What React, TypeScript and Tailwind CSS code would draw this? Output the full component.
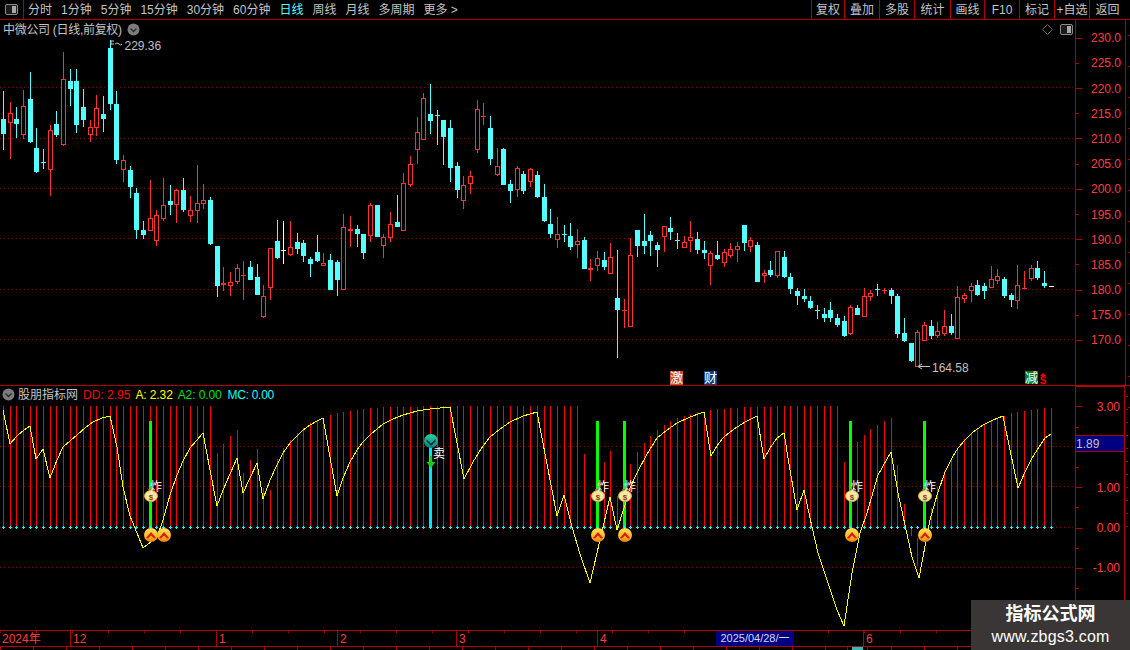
import React from "react";

// kind (0 cyan, 1 red, 2 white), high, body top, body bottom, low
type Candle = [number, number, number, number, number];

const candles: Candle[] = [
  [0,91,119,134,150],[1,102,113,123,159],[0,107,119,124,138],[1,90,106,135,139],[0,72,99,142,143],
  [0,128,148,172,173],[0,149,162,163,169],[1,125,130,170,196],[0,111,124,135,137],[1,52,79,145,146],
  [0,69,81,89,106],[0,69,81,125,133],[0,89,107,120,127],[1,120,127,135,142],[1,95,108,128,136],
  [0,96,114,119,132],[0,40,48,104,110],[0,91,104,160,164],[1,155,160,170,182],[0,166,170,187,198],
  [0,188,193,230,239],[0,221,230,235,239],[1,180,218,231,231],[1,210,215,241,246],[1,178,205,219,221],
  [0,185,201,205,215],[1,189,190,205,223],[0,178,190,210,212],[1,196,210,216,222],[1,165,203,211,223],
  [1,184,200,204,209],[0,197,200,244,245],[0,246,246,286,297],[1,267,283,285,291],[1,272,282,286,296],
  [1,264,268,282,284],[1,261,275,276,300],[0,261,267,280,280],[0,264,277,295,295],[1,285,296,317,318],
  [1,248,248,288,300],[0,220,241,258,259],[2,221,250,251,264],[1,221,247,255,256],[0,233,242,249,254],
  [0,240,243,256,262],[0,257,259,264,277],[0,235,252,261,262],[1,253,263,266,266],[0,254,260,290,290],
  [0,260,262,280,296],[1,214,227,290,290],[1,216,229,231,247],[0,225,229,234,247],[0,234,234,253,259],
  [1,203,205,236,242],[0,205,205,237,237],[1,234,237,246,258],[1,212,224,238,242],[0,195,222,227,227],
  [1,173,183,231,231],[1,156,164,185,187],[1,117,132,150,164],[1,93,98,140,140],[0,84,114,121,134],
  [0,110,115,116,145],[0,120,120,137,165],[0,120,128,168,182],[0,162,166,190,198],[1,176,185,201,209],
  [1,171,176,184,194],[1,100,109,150,153],[1,103,116,117,125],[0,116,128,159,165],[1,148,166,175,176],
  [0,148,149,185,185],[0,180,184,191,203],[1,166,168,190,197],[0,171,174,191,194],[1,168,169,182,187],
  [0,171,175,197,198],[0,184,197,221,222],[0,209,224,234,238],[1,217,234,240,248],[0,225,234,235,242],
  [0,223,236,247,250],[1,229,241,245,258],[0,237,240,269,269],[1,259,268,270,281],[1,251,258,266,271],
  [0,252,260,267,270],[1,243,257,274,274],[0,250,298,310,358],[1,299,310,311,328],[1,238,255,327,327],
  [0,230,230,246,257],[0,214,241,246,254],[0,231,235,241,256],[0,242,245,250,267],[1,226,226,237,252],
  [0,217,228,232,240],[0,233,240,241,249],[1,236,242,248,248],[1,221,237,241,252],[0,232,239,250,254],
  [0,241,250,253,259],[1,251,253,266,285],[0,241,255,259,260],[1,249,252,263,267],[1,243,249,256,258],
  [1,242,246,250,262],[0,225,225,243,251],[1,237,240,247,252],[0,242,245,282,282],[1,270,273,276,283],
  [0,261,270,275,277],[1,251,251,276,278],[0,251,257,277,278],[0,273,277,289,294],[0,288,291,296,305],
  [0,289,296,299,302],[0,296,301,308,309],[0,305,310,311,319],[0,308,314,318,322],[0,302,310,318,322],
  [0,314,318,325,327],[0,316,321,336,337],[1,305,307,334,335],[0,305,308,315,315],[1,288,296,317,317],
  [1,290,293,297,301],[0,284,289,290,296],[1,288,290,291,294],[0,288,290,296,304],[0,294,296,334,338],
  [0,318,333,341,342],[0,343,343,361,362],[1,330,332,367,367],[1,322,325,341,341],[0,320,326,336,339],
  [1,322,331,336,338],[1,310,326,334,336],[0,314,326,333,335],[1,286,297,339,339],[1,293,295,299,303],
  [1,283,286,291,302],[0,280,285,295,296],[0,283,286,291,299],[1,266,279,288,288],[1,269,276,281,284],
  [0,277,279,296,298],[0,293,295,300,307],[1,265,285,301,309],[1,271,288,289,289],[1,265,268,279,281],
  [0,261,268,278,280],[0,271,283,286,288],[2,286,286,287,287],
];

// top of each red bar in the indicator panel, 0 where a green signal bar stands instead
const barTops = [
  406,406,406,406,406,406,406,406,406,406,406,406,406,406,406,406,406,406,406,406,406,406,406,406,406,406,406,406,406,406,406,406,
  453,444,436,430,473,460,449,488,490,459,448,440,433,428,423,420,418,415,413,412,411,410,409,408,408,407,407,407,407,407,407,
  406,406,406,406,406,406,406,406,406,406,406,406,406,406,406,406,406,406,406,406,406,406,406,406,
  454,494,0,462,451,496,0,464,452,443,436,430,425,421,418,416,414,412,412,410,409,409,408,408,407,407,407,407,407,
  406,406,406,406,406,406,406,406,406,406,462,0,442,435,429,425,421,418,465,504,0,0,0,508,487,471,458,448,439,434,428,424,421,418,416,413,412,411,410,409,408,408,
];

const yellowLine =
  "3,410 10,444 17,436 24,430 30,426 36,459 43,449 50,478 57,460 63,447 70,441 77,435 85,428 93,422 102,418 110,416 117,447 123,487 130,516 137,533 143,548 157,537 163,520 170,495 177,475 183,461 190,448 197,440 203,433 210,470 217,506 223,490 230,474 237,458 243,493 250,478 257,463 263,499 270,480 277,465 283,453 290,443 297,436 303,430 310,425 317,421 323,418 330,457 337,496 343,478 350,462 357,450 363,442 370,435 377,429 383,424 393,419 403,415 417,411 430,409 440,408 450,407 457,443 464,479 473,462 481,449 490,437 500,429 510,422 523,416 537,412 547,464 557,516 564,495 572,527 580,554 590,583 600,540 610,497 617,530 624,508 630,488 637,473 647,454 657,438 667,430 677,423 690,417 704,412 711,456 717,446 723,438 730,432 737,427 747,421 757,416 764,459 770,448 777,438 784,433 790,470 797,510 804,490 812,527 818,553 827,580 837,610 844,626 852,573 860,533 867,513 878,475 891,452 898,493 905,525 912,557 919,578 930,520 937,495 945,472 952,458 958,448 965,440 973,432 983,425 993,420 1003,416 1010,450 1018,488 1025,472 1032,458 1039,447 1045,438 1051,434";

const candleX = (i: number) => Math.round(3 + i * 6.673);

const leftTabs = [
  { label: "分时" },
  { label: "1分钟" },
  { label: "5分钟" },
  { label: "15分钟" },
  { label: "30分钟" },
  { label: "60分钟" },
  { label: "日线", active: true },
  { label: "周线" },
  { label: "月线" },
  { label: "多周期" },
  { label: "更多 >" },
];

const rightTabs = [
  { label: "复权", w: "w-[33px]" },
  { label: "叠加", w: "w-[35px]" },
  { label: "多股", w: "w-[35px]" },
  { label: "统计", w: "w-[36px]" },
  { label: "画线", w: "w-[34px]" },
  { label: "F10", w: "w-[35px]" },
  { label: "标记", w: "w-[35px]" },
  { label: "+自选", w: "w-[35px]" },
  { label: "返回", w: "w-[36px]" },
];

const priceLabels = ["230.0", "225.0", "220.0", "215.0", "210.0", "205.0", "200.0", "195.0", "190.0", "185.0", "180.0", "175.0", "170.0"];
const indicatorLabels = ["3.00", "", "", "", "1.00", "", "0.00", "", "-1.00", "", ""];

const timeCells = [
  { label: "2024年", w: "w-[70px]" },
  { label: "12", w: "w-[146px]" },
  { label: "1", w: "w-[121px]" },
  { label: "2", w: "w-[119px]" },
  { label: "3", w: "w-[141px]" },
  { label: "4", w: "w-[119px]" },
];

function RoundArrow({ className }: { className: string }) {
  return (
    <svg width="13" height="13" viewBox="0 0 13 13" className={className}>
      <circle cx="6.5" cy="6.5" r="6" fill="#7c7c7c" />
      <path d="M3.5 5.5 L6.5 8.5 L9.5 5.5" fill="none" stroke="#2a2a2a" strokeWidth="1.3" />
    </svg>
  );
}

function SplitButton({ className }: { className?: string }) {
  return (
    <svg width="13" height="11" viewBox="0 0 13 11" className={className}>
      <rect x="0.5" y="0.5" width="12" height="10" rx="1.5" fill="#1c1c1c" stroke="#8a8a8a" />
      <rect x="7" y="2" width="4" height="7" fill="#a8a8a8" />
    </svg>
  );
}

function UpSignal({ x }: { x: number }) {
  return (
    <g>
      <circle cx={x} cy="535" r="7" fill="url(#signalUp)" />
      <path d={`M${x - 5} 538 L${x} 532 L${x + 5} 538 L${x + 3} 538.5 L${x} 535.5 L${x - 3} 538.5 Z`} fill="#d81e06" />
    </g>
  );
}

function MoneyBag({ x }: { x: number }) {
  return (
    <g>
      <path d={`M${x - 3} 489 L${x + 2} 489 L${x + 1} 491 L${x - 2} 491 Z`} fill="#a8703a" />
      <ellipse cx={x} cy="496" rx="6.5" ry="5.5" fill="#f6e7a2" stroke="#d9a93c" />
      <text x={x} y="499.5" textAnchor="middle" fontSize="8" fontWeight="700" fill="#8a3a2a">$</text>
      <text x={x - 1} y="490.5" fontSize="12" fill="#ffffff">炸</text>
    </g>
  );
}

function DottedLine({ y }: { y: number }) {
  return <line x1="0" x2="1075" y1={y + 0.5} y2={y + 0.5} stroke="#800000" strokeDasharray="1 3" shapeRendering="auto" />;
}

function PriceChart() {
  return (
    <svg viewBox="0 20 1075 365" className="block h-[365px] w-[1075px]" shapeRendering="crispEdges">
      {[87, 138, 188, 238, 289, 339].map((y) => (
        <DottedLine key={y} y={y} />
      ))}
      {candles.map(([kind, high, top, bottom, low], i) => {
        const x = candleX(i);
        const color = kind === 0 ? "#54ffff" : kind === 1 ? "#ff3232" : "#ffffff";
        const flat = bottom - top < 3;
        return (
          <g key={i}>
            <line x1={x + 0.5} x2={x + 0.5} y1={high} y2={low} stroke={color} />
            {kind === 1 && !flat ? (
              <rect x={x - 1.5} y={top + 0.5} width="4" height={bottom - top - 1} fill="#000000" stroke={color} />
            ) : (
              <rect x={x - 2} y={top} width="5" height={Math.max(bottom - top, 1)} fill={color} />
            )}
          </g>
        );
      })}
      <g shapeRendering="auto">
        <path d="M111 44 L111 41 L114 41 M111 44 L114 44 M115 44 Q117 42 119 44 T122 44" fill="none" stroke="#c0c0c0" />
        <text x="124.5" y="50" fontSize="12" fill="#c0c0c0">229.36</text>
        <path d="M918 366.5 L930 366.5 M918 366.5 L922 364 M918 366.5 L922 369" fill="none" stroke="#c0c0c0" />
        <text x="932" y="372" fontSize="12" fill="#c0c0c0">164.58</text>
      </g>
      <rect x="670" y="371" width="13" height="14" fill="#c8501e" />
      <rect x="704" y="371" width="13" height="14" fill="#0c3f78" />
      <rect x="1025" y="371" width="13" height="13" fill="#0a7a12" />
      <g shapeRendering="auto">
        <text x="670" y="382" fontSize="13" fill="#ffffff">激</text>
        <text x="704" y="382" fontSize="13" fill="#ffffff">财</text>
        <text x="1025" y="382" fontSize="13" fill="#ffffff">减</text>
        <path d="M1043 373 L1046 376 L1040 376 Z" fill="#ff0000" />
        <text x="1043" y="384" textAnchor="middle" fontSize="10" fontWeight="700" fill="#ff0000">S</text>
      </g>
    </svg>
  );
}

function IndicatorChart() {
  return (
    <svg viewBox="0 386 1075 244" className="block h-[244px] w-[1075px]" shapeRendering="crispEdges">
      <defs>
        <linearGradient id="signalUp" x1="0" y1="0" x2="0" y2="1">
          <stop offset="0" stopColor="#ffe45c" />
          <stop offset="0.6" stopColor="#fdb52a" />
          <stop offset="1" stopColor="#ee7f0a" />
        </linearGradient>
        <linearGradient id="signalDown" x1="0" y1="0" x2="0" y2="1">
          <stop offset="0" stopColor="#2ad0a8" />
          <stop offset="1" stopColor="#0e7f78" />
        </linearGradient>
      </defs>
      {[446, 486, 527, 567].map((y) => (
        <DottedLine key={y} y={y} />
      ))}
      {barTops.map((top, i) =>
        top ? <line key={i} x1={candleX(i) + 0.5} x2={candleX(i) + 0.5} y1={top} y2="527" stroke="#ff0000" /> : null,
      )}
      <line x1={candleX(136) + 0.5} x2={candleX(136) + 0.5} y1="527" y2="536" stroke="#ff0000" />
      <line x1={candleX(137) + 0.5} x2={candleX(137) + 0.5} y1="538" y2="566" stroke="#ff0000" />
      {[22, 89, 93, 127, 138].map((i) => (
        <rect key={i} x={candleX(i) - 1} y="421" width="3" height="106" fill="#00ff00" />
      ))}
      <rect x={candleX(64) - 1} y="441" width="3" height="86" fill="#00e5ff" />
      {barTops.map((_, i) => (
        <path key={i} d={`M${candleX(i) - 1} 527.5 h3 M${candleX(i) + 0.5} 526 v3`} stroke="#00ffff" fill="none" />
      ))}
      <polyline points={yellowLine} fill="none" stroke="#ffff00" strokeWidth="1" />
      <g shapeRendering="auto">
        {[151, 598, 625, 852, 925].map((x) => (
          <MoneyBag key={x} x={x} />
        ))}
        {[151, 164, 598, 625, 852, 925].map((x) => (
          <UpSignal key={x} x={x} />
        ))}
        <circle cx="431" cy="441" r="7" fill="url(#signalDown)" />
        <path d="M426.5 439 L431 443.5 L435.5 439 L435.5 441.5 L431 446 L426.5 441.5 Z" fill="#123a3a" />
        <path d="M429.8 456 h2.4 v6 h3.3 L431 468 L426.5 462 h3.3 Z" fill="#0bd60b" />
        <text x="433" y="458" fontSize="12" fill="#ffffff">卖</text>
      </g>
    </svg>
  );
}

export default function App() {
  return (
    <div className="relative flex h-[650px] w-[1130px] flex-col overflow-hidden bg-black text-[12px] leading-none text-[#c4c4c4] [font-family:'Liberation_Sans','Noto_Sans_CJK_SC',sans-serif]">
      {/* top toolbar */}
      <div className="flex h-[20px] shrink-0 items-stretch border-b border-[#b00000]">
        <div className="flex w-[24px] items-center justify-center border-r border-[#b00000]">
          <SplitButton />
        </div>
        <div className="flex items-center gap-[9px] pl-[4px]">
          {leftTabs.map((t) => (
            <span key={t.label} className={t.active ? "text-[#54ffff]" : ""}>
              {t.label}
            </span>
          ))}
        </div>
        <div className="ml-auto flex pr-[5px]">
          {rightTabs.map((t) => (
            <div key={t.label} className={`${t.w} flex items-center justify-center border-l border-[#b00000]`}>
              {t.label}
            </div>
          ))}
        </div>
      </div>

      {/* price panel */}
      <div className="flex h-[366px] shrink-0 border-b border-[#b00000]">
        <div className="relative w-[1075px] shrink-0">
          <PriceChart />
          <div className="absolute left-[3px] top-[3px] flex items-center gap-[5px]">
            <span className="tracking-[-0.3px]">中微公司 (日线,前复权)</span>
            <RoundArrow className="" />
          </div>
          <svg width="11" height="11" viewBox="0 0 11 11" className="absolute left-[1042px] top-[4px]">
            <path d="M5.5 0.5 L10.5 5.5 L5.5 10.5 L0.5 5.5 Z" fill="none" stroke="#6a6a6a" />
          </svg>
          <SplitButton className="absolute left-[1060px] top-[4px]" />
        </div>
        <div className="flex w-[50px] shrink-0 flex-col border-l border-[#b00000] pt-[5.6px] text-[#ff3c3c]">
          {priceLabels.map((p, i) => (
            <div key={p} className="flex h-[25.2px] items-center justify-between pr-[4px]">
              <div className={`h-px bg-[#b00000] ${i % 2 === 0 ? "w-[6px]" : "w-[3px]"}`} />
              <span>{p}</span>
            </div>
          ))}
        </div>
        <div className="flex w-[5px] flex-col gap-[30px] border-l border-[#b00000] pl-[2px] pt-[15px]">
          {priceLabels.map((p) => (
            <div key={p} className="h-px w-[2px] shrink-0 bg-[#b00000]" />
          ))}
        </div>
      </div>

      {/* indicator panel */}
      <div className="flex h-[244px] shrink-0">
        <div className="relative w-[1075px] shrink-0">
          <IndicatorChart />
          <div className="absolute left-[2px] top-[2px] flex items-center">
            <RoundArrow className="mr-[3px]" />
            <span className="mr-[5px]">股朋指标网</span>
            <span className="mr-[5px] text-[#ff0000]">DD: 2.95</span>
            <span className="mr-[5px] tracking-[-0.1px] text-[#ffff00]">A: 2.32</span>
            <span className="mr-[6px] tracking-[-0.1px] text-[#00e000]">A2: 0.00</span>
            <span className="tracking-[-0.3px] text-[#00ffff]">MC: 0.00</span>
          </div>
        </div>
        <div className="relative flex w-[50px] shrink-0 flex-col border-x border-t border-[#b00000] pt-[9.9px] text-[#ff3c3c]">
          {indicatorLabels.map((p, i) => (
            <div key={i} className="flex h-[20.2px] items-center justify-between pr-[4px]">
              <div className={`h-px bg-[#b00000] ${p ? "w-[6px]" : "w-[3px]"}`} />
              <span>{p}</span>
            </div>
          ))}
          <div className="absolute left-0 top-[48px] flex h-[17px] w-[48px] items-center border-y border-[#b00000] bg-[#000080] text-[#c4c4c4]">
            1.89
          </div>
        </div>
        <div className="flex w-[4px] flex-col gap-[12px] pl-[1px] pt-[10px]">
          {indicatorLabels.map((p, i) => (
            <div key={i} className="h-px w-[2px] shrink-0 bg-[#b00000]" />
          ))}
        </div>
      </div>

      {/* time axis */}
      <div className="relative flex h-[17px] shrink-0 items-center border-y border-[#b00000] text-[#ff3c3c]">
        <div className="absolute inset-x-0 top-0 h-[2px] bg-[repeating-linear-gradient(90deg,#b00000_0,#b00000_1px,transparent_1px,transparent_36px)]" />
        {timeCells.map((c, i) => (
          <div key={c.label} className={`${c.w} flex h-full items-center pl-[2px] ${i ? "border-l border-[#b00000]" : ""}`}>
            {c.label}
          </div>
        ))}
        <div className="z-10 flex h-full w-[78px] items-center justify-center bg-[#000080] text-[11px] text-[#d8d8ff]">
          2025/04/28/一
        </div>
        <div className="h-full w-[69px]" />
        <div className="flex h-full items-center border-l border-[#b00000] pl-[2px]">6</div>
      </div>

      {/* strip under the time axis */}
      <div className="flex flex-1 items-stretch bg-[repeating-linear-gradient(90deg,#b00000_0,#b00000_1px,transparent_1px,transparent_33px)]">
        <div className="ml-[847px] w-[21px] border-x border-[#b00000] bg-black px-[4px]">
          <div className="h-full bg-[#2fbcbc]" />
        </div>
      </div>

      {/* watermark */}
      <div className="absolute bottom-0 right-0 flex h-[50px] w-[159px] flex-col items-center justify-center gap-[6px] bg-[#3a3636] text-white">
        <span className="text-[18px] font-bold">指标公式网</span>
        <span className="text-[16px] tracking-[0.2px]">www.zbgs3.com</span>
      </div>
    </div>
  );
}
